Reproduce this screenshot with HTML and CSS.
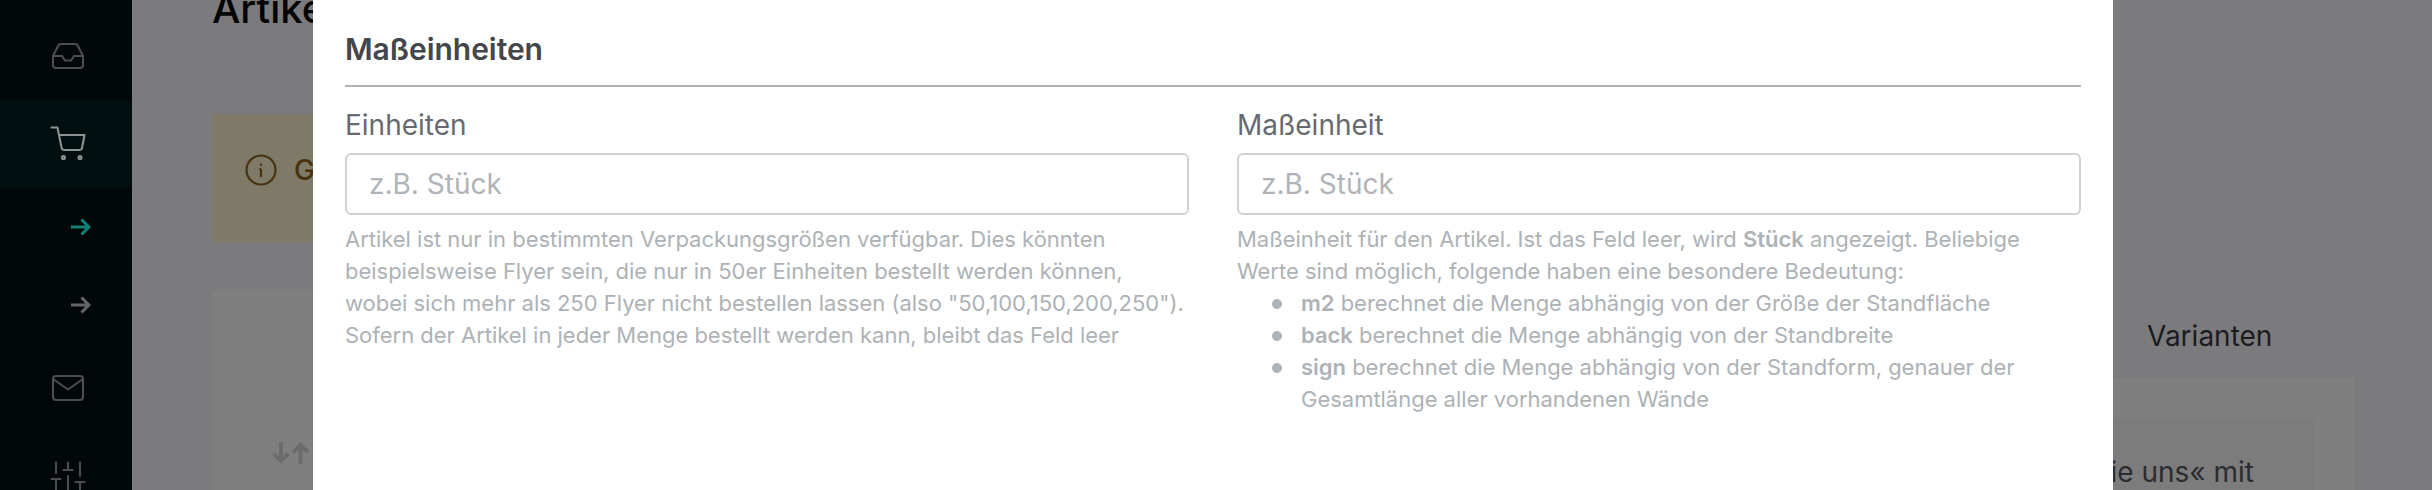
FILE: index.html
```html
<!DOCTYPE html>
<html lang="de">
<head>
<meta charset="utf-8">
<title>Artikel</title>
<link rel="stylesheet" href="styles.css">
</head>
<body>
<div class="app">
  <nav class="sidebar">
    <a class="nav-item"><svg class="icon" viewBox="0 0 24 24"><path d="M22 12h-6l-2 3h-4l-2-3H2"/><path d="M5.450 5.110 2 12v6a2 2 0 0 0 2 2h16a2 2 0 0 0 2-2v-6l-3.450-6.890A2 2 0 0 0 16.760 4H7.240a2 2 0 0 0-1.790 1.110z"/></svg></a>
    <a class="nav-item active"><svg class="icon" viewBox="0 0 24 24"><circle cx="9" cy="21" r="1"/><circle cx="20" cy="21" r="1"/><path d="M1 1h4l2.680 13.390a2 2 0 0 0 2 1.610h9.720a2 2 0 0 0 2-1.610L23 6H6"/></svg></a>
    <a class="nav-sub current"><svg class="arrow" viewBox="0 0 20 18"><path d="M0 9h18M10.500 1.500 18 9l-7.500 7.500"/></svg></a>
    <a class="nav-sub"><svg class="arrow" viewBox="0 0 20 18"><path d="M0 9h18M10.500 1.500 18 9l-7.500 7.500"/></svg></a>
    <a class="nav-item"><svg class="icon" viewBox="0 0 24 24"><rect x="2" y="4" width="20" height="16" rx="2"/><path d="m22 6-10 7L2 6"/></svg></a>
    <a class="nav-item"><svg class="icon" viewBox="0 0 24 24"><path d="M4 21v-7M4 10V3M12 21v-9M12 8V3M20 21v-5M20 12V3M1 14h6M9 8h6M17 16h6"/></svg></a>
  </nav>
  <main class="page">
    <h1 class="page-title">Artikel</h1>
    <div class="columns">
      <section class="col-main">
        <div class="alert">
          <svg class="info" viewBox="0 0 32 32"><circle cx="16" cy="16" r="14.500"/><path class="info-i" d="M16 15v8M14.300 15.200H16M16 9.500v2.200"/></svg>
          <span>G</span>
        </div>
        <div class="card list-card">
          <svg class="sort" viewBox="0 0 38 22"><path d="M9 0v19M1.500 11.500 9 19l7.500-7.500M28.500 22V3M21 10.500 28.500 3l7.500 7.500"/></svg>
        </div>
      </section>
      <section class="col-side">
        <h2 class="side-title">Varianten</h2>
        <div class="card side-card"><div class="quote">»Sie uns« mit</div></div>
      </section>
    </div>
  </main>
</div>
<div class="modal">
  <h3 class="modal-title">Maßeinheiten</h3>
  <div class="fields">
    <div class="field">
      <label class="label" for="units">Einheiten</label>
      <input class="input" id="units" placeholder="z.B. Stück">
      <div class="help">Artikel ist nur in bestimmten Verpackungsgrößen verfügbar. Dies könnten<br>beispielsweise Flyer sein, die nur in 50er Einheiten bestellt werden können,<br>wobei sich mehr als 250 Flyer nicht bestellen lassen (also "50,100,150,200,250").<br>Sofern der Artikel in jeder Menge bestellt werden kann, bleibt das Feld leer</div>
    </div>
    <div class="field">
      <label class="label" for="unit">Maßeinheit</label>
      <input class="input" id="unit" placeholder="z.B. Stück">
      <div class="help">Maßeinheit für den Artikel. Ist das Feld leer, wird <b>Stück</b> angezeigt. Beliebige<br>Werte sind möglich, folgende haben eine besondere Bedeutung:
        <ul class="hints">
          <li><b>m2</b> berechnet die Menge abhängig von der Größe der Standfläche</li>
          <li><b>back</b> berechnet die Menge abhängig von der Standbreite</li>
          <li><b>sign</b> berechnet die Menge abhängig von der Standform, genauer der<br>Gesamtlänge aller vorhandenen Wände</li>
        </ul>
      </div>
    </div>
  </div>
</div>
</body>
</html>
```
FILE: styles.css
```css
* { box-sizing: border-box; }
body { margin: 0; height: 490px; overflow: hidden; position: relative; font: 400 28px/42px Inter, "Liberation Sans", sans-serif; background: #7b7b7d; }
h1, h2, h3, ul { margin: 0; padding: 0; }
svg { display: block; fill: none; stroke: currentColor; stroke-linecap: round; stroke-linejoin: round; flex: none; }

.app { display: flex; height: 490px; overflow: hidden; }
.sidebar { width: 132px; flex: none; background: #020708; padding-top: 12px; color: #4b4e4f; }
.nav-item { display: flex; align-items: center; height: 88px; padding-left: 50px; }
.nav-item.active { background: #020f10; color: #8d9393; }
.icon { width: 36px; height: 36px; stroke-width: 1.4; }
.nav-sub { display: flex; align-items: center; height: 78px; padding-left: 71px; color: #626667; }
.nav-sub.current { color: #128079; }
.arrow { width: 20px; height: 18px; stroke-width: 3; stroke-linecap: butt; stroke-linejoin: miter; }

.page { flex: 1; padding: 0 78px 0 80px; }
.page-title { height: 35px; line-height: 50px; margin-top: -16px; font-size: 40px; font-weight: 500; color: #020203; }
.columns { display: flex; padding-top: 95px; }
.col-main { width: 1500px; }
.alert { display: flex; align-items: center; height: 128px; padding: 0 33px 16px; gap: 17px; background: #7f7967; color: #47340f; font-weight: 500; }
.info { width: 32px; height: 32px; stroke-width: 2.2; }
.info-i { stroke-linecap: butt; }
.card { background: #7f7f7f; }
.list-card { margin-top: 49px; height: 260px; padding: 151px 60px 0; }
.sort { width: 38px; height: 22px; color: #6b6b6b; stroke-width: 3.8; stroke-linecap: butt; stroke-linejoin: miter; }
.col-side { flex: 1; padding-top: 201px; }
.side-title { padding-left: 435px; height: 63px; font-size: 28px; font-weight: 400; color: #1b1c1f; }
.side-card { height: 200px; padding: 40px 40px 0; }
.quote { height: 150px; padding: 33px 60px 0; text-align: right; background: #7c7c7c; color: #2a2c30; }

.modal { position: absolute; left: 313px; top: 0; width: 1800px; height: 490px; padding: 24px 32px; background: #fff; }
.modal-title { height: 63px; line-height: 50px; font-size: 30px; font-weight: 600; letter-spacing: -0.05px; color: #43474c; border-bottom: 2px solid #afb4b3; }
.fields { display: grid; grid-template-columns: 1fr 1fr; gap: 48px; padding-top: 17px; }
.label { display: block; height: 49px; line-height: 42px; color: #666a70; }
.input { display: block; width: 100%; height: 62px; padding: 0 22px; border: 2px solid #d1d1d2; border-radius: 6px; font: inherit; background: #fff; outline: none; }
.input::placeholder { color: #b0b4b8; opacity: 1; }
.help { padding-top: 8px; font-size: 22px; line-height: 32px; letter-spacing: -0.02px; color: #adb2b6; white-space: nowrap; }
.help b { font-weight: 600; }
.hints { list-style: none; }
.hints li { padding-left: 64px; background: radial-gradient(circle at 5px 5px, #adb2b6 4.500px, transparent 5.300px) 35px 12px / 10px 10px no-repeat; }
```
